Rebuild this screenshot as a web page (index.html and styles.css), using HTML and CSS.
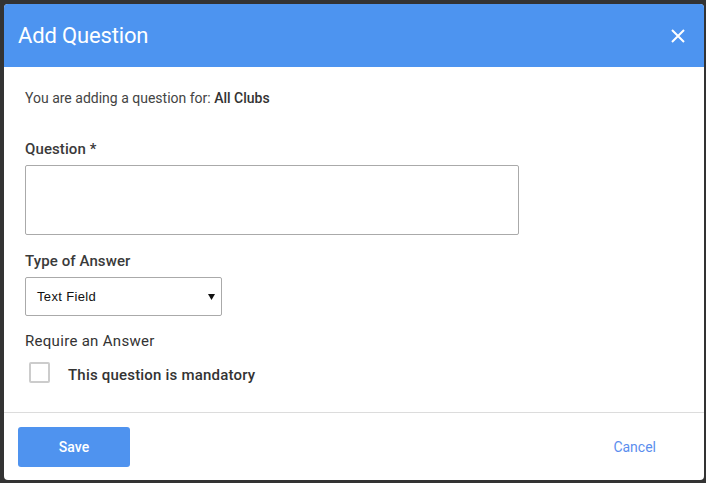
FILE: index.html
```html
<!DOCTYPE html>
<html>
<head>
<meta charset="utf-8">
<link rel="stylesheet" href="styles.css">
</head>
<body>
<div class="dialog">
  <div class="header">
    <h1 class="title">Add Question</h1>
    <svg class="close" width="14" height="14" viewBox="0 0 14 14"><path d="M1 1L13 13M13 1L1 13" stroke="#fff" stroke-width="2" fill="none"/></svg>
  </div>
  <div class="content">
    <p class="intro">You are adding a question for: <strong>All Clubs</strong></p>
    <div class="label label-q">Question *</div>
    <div class="textarea"></div>
    <div class="label label-type">Type of Answer</div>
    <div class="select"><span class="select-text">Text Field</span><svg class="arrow" width="7" height="6" viewBox="0 0 7 6"><path d="M0 0H7L3.5 6Z" fill="#111"/></svg></div>
    <div class="label label-req">Require an Answer</div>
    <div class="check-row"><span class="checkbox"></span><span class="check-label">This question is mandatory</span></div>
  </div>
  <div class="footer">
    <button class="btn-save">Save</button>
    <button class="btn-cancel">Cancel</button>
  </div>
</div>
</body>
</html>
```
FILE: styles.css
```css
html, body { margin: 0; padding: 0; }
body {
  background: #333333;
  width: 706px;
  height: 483px;
  padding: 4px 2px 3px 4px;
  box-sizing: border-box;
  font-family: Roboto, "Noto Sans", sans-serif;
}
.dialog {
  width: 700px;
  height: 476px;
  background: #ffffff;
  border-radius: 4px;
  overflow: hidden;
  display: flex;
  flex-direction: column;
}
.header {
  height: 63px;
  background: #4d94f0;
  display: flex;
  align-items: center;
  justify-content: space-between;
  padding: 0 19px 0 14px;
  flex-shrink: 0;
}
.title {
  margin: 0;
  color: #ffffff;
  font-size: 22px;
  font-weight: 400;
  line-height: 26px;
  letter-spacing: -0.15px;
}
.close { display: block; }
.content {
  padding: 22px 21px 0 21px;
  flex: 1;
  border-bottom: 1px solid #dcdcdc;
}
.intro {
  margin: 0;
  font-size: 14px;
  line-height: 18px;
  color: #444444;
}
.intro strong { font-weight: 500; color: #333333; }
.label {
  font-size: 15px;
  line-height: 18px;
  color: #3a3a3a;
  font-weight: 500;
  letter-spacing: 0.1px;
}
.label-q { margin-top: 33px; }
.label-type { margin-top: 17px; }
.label-req { margin-top: 16px; font-weight: 400; color: #333333; letter-spacing: 0.3px; }
.textarea {
  margin-top: 7px;
  width: 494px;
  height: 70px;
  box-sizing: border-box;
  border: 1px solid #aaaaaa;
  border-radius: 2px;
}
.select {
  margin-top: 7px;
  width: 197px;
  height: 39px;
  box-sizing: border-box;
  border: 1px solid #aaaaaa;
  border-radius: 2px;
  display: flex;
  align-items: center;
  justify-content: space-between;
  padding: 0 6px 0 11px;
}
.select-text {
  font-family: "Liberation Sans", Arial, sans-serif;
  font-size: 13px;
  color: #111111;
  letter-spacing: 0.35px;
}
.arrow { display: block; margin-top: 1px; }
.check-row {
  margin-top: 11px;
  display: flex;
  align-items: center;
  padding-left: 4px;
}
.checkbox {
  width: 21px;
  height: 21px;
  box-sizing: border-box;
  border: 2px solid #cccccc;
  border-radius: 2px;
  flex-shrink: 0;
}
.check-label {
  margin-left: 18px;
  margin-top: 5px;
  font-size: 15px;
  font-weight: 500;
  color: #333333;
  letter-spacing: 0.2px;
}
.footer {
  height: 67px;
  flex-shrink: 0;
  display: flex;
  align-items: flex-start;
  justify-content: space-between;
  padding: 14px 46px 0 14px;
  box-sizing: border-box;
}
.btn-save {
  width: 112px;
  height: 40px;
  border: none;
  border-radius: 3px;
  background: #4f93ef;
  color: #ffffff;
  font-family: Roboto, sans-serif;
  font-size: 14px;
  font-weight: 500;
  padding: 0;
}
.btn-cancel {
  height: 40px;
  border: none;
  background: transparent;
  color: #5b8eee;
  font-family: Roboto, sans-serif;
  font-size: 14px;
  font-weight: 400;
  padding: 0 2px;
}
```
